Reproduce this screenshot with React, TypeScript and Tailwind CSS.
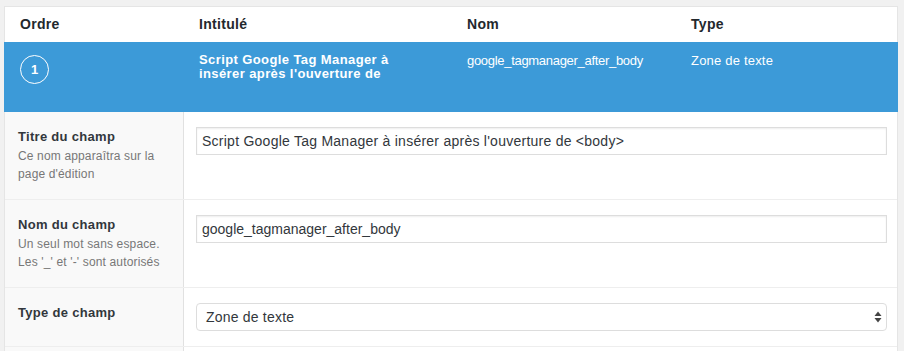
const font = { fontFamily: '"Liberation Sans", Arial, sans-serif' };

const FieldRow = ({
    label,
    desc,
    children,
}: {
    label: string;
    desc?: string[];
    children: React.ReactNode;
}) => (
    <div className="flex border-b border-[#eeeeee]">
        <div className="w-[179px] shrink-0 bg-[#f9f9f9] border-r border-[#e1e1e1] pl-[13px] pr-3 pt-[15px] pb-[16px]">
            <p className="text-[13px] leading-[20px] font-bold text-[#32373c] tracking-[0.3px]">{label}</p>
            {desc && (
                <p className="text-[12px] leading-[18px] text-[#777777] tracking-[0.15px]">
                    {desc.map((line) => (
                        <span key={line} className="block">
                            {line}
                        </span>
                    ))}
                </p>
            )}
        </div>
        <div className="flex-grow pl-3 pr-[10px] pt-[15px] pb-[15px]">{children}</div>
    </div>
);

export default function App() {
    return (
        <div className="w-[904px] h-[351px] overflow-hidden bg-[#f1f1f1] pt-[6px] pl-[4px] pr-[6px]" style={font}>
            <div className="bg-white border border-[#e5e5e5] border-b-0 h-full">
                {/* Column headers */}
                <div className="flex items-center h-[35px] text-[14px] font-bold text-[#23282d] tracking-[0.3px]">
                    <div className="w-[194px] pl-[15px]">Ordre</div>
                    <div className="w-[268px]">Intitulé</div>
                    <div className="w-[224px]">Nom</div>
                    <div>Type</div>
                </div>

                {/* Selected field handle */}
                <div className="-mx-px flex h-[70px] bg-[#3c9ad8] text-white text-[13px]">
                    <div className="w-[195px] pl-[16px] pt-[13px]">
                        <div className="w-[29px] h-[29px] rounded-full border-[1.5px] border-white flex items-center justify-center text-[13px] font-bold">
                            1
                        </div>
                    </div>
                    <div className="w-[268px] pt-[11px] font-bold leading-[14px] tracking-[0.4px]">
                        <span className="block">Script Google Tag Manager à</span>
                        <span className="block">insérer après l'ouverture de</span>
                    </div>
                    <div className="w-[224px] pt-[12px] leading-[14px] tracking-[-0.3px]">google_tagmanager_after_body</div>
                    <div className="pt-[12px] leading-[14px] tracking-[0.2px]">Zone de texte</div>
                </div>

                {/* Settings */}
                <FieldRow label="Titre du champ" desc={['Ce nom apparaîtra sur la', "page d'édition"]}>
                    <div className="h-[28px] border border-[#dddddd] shadow-[inset_0_1px_2px_rgba(0,0,0,0.07)] px-[5px] flex items-center text-[14px] text-[#32373c] tracking-[0.25px]">
                        Script Google Tag Manager à insérer après l'ouverture de &lt;body&gt;
                    </div>
                </FieldRow>
                <FieldRow label="Nom du champ" desc={['Un seul mot sans espace.', "Les '_' et '-' sont autorisés"]}>
                    <div className="h-[28px] border border-[#dddddd] shadow-[inset_0_1px_2px_rgba(0,0,0,0.07)] px-[5px] flex items-center text-[14px] text-[#32373c]">
                        google_tagmanager_after_body
                    </div>
                </FieldRow>
                <FieldRow label="Type de champ">
                    <div className="h-[28px] border border-[#dddddd] rounded-[4px] pl-[9px] pr-[4px] flex items-center justify-between text-[14px] text-[#32373c] tracking-[0.2px]">
                        <span>Zone de texte</span>
                        <svg width="8" height="12" viewBox="0 0 8 12" className="text-[#444444]">
                            <path d="M4 0.5 L7.5 5 L0.5 5 Z" fill="currentColor" />
                            <path d="M4 11.5 L7.5 7 L0.5 7 Z" fill="currentColor" />
                        </svg>
                    </div>
                </FieldRow>
                <div className="flex h-[20px]">
                    <div className="w-[179px] bg-[#f9f9f9] border-r border-[#e1e1e1]" />
                </div>
            </div>
        </div>
    );
}
